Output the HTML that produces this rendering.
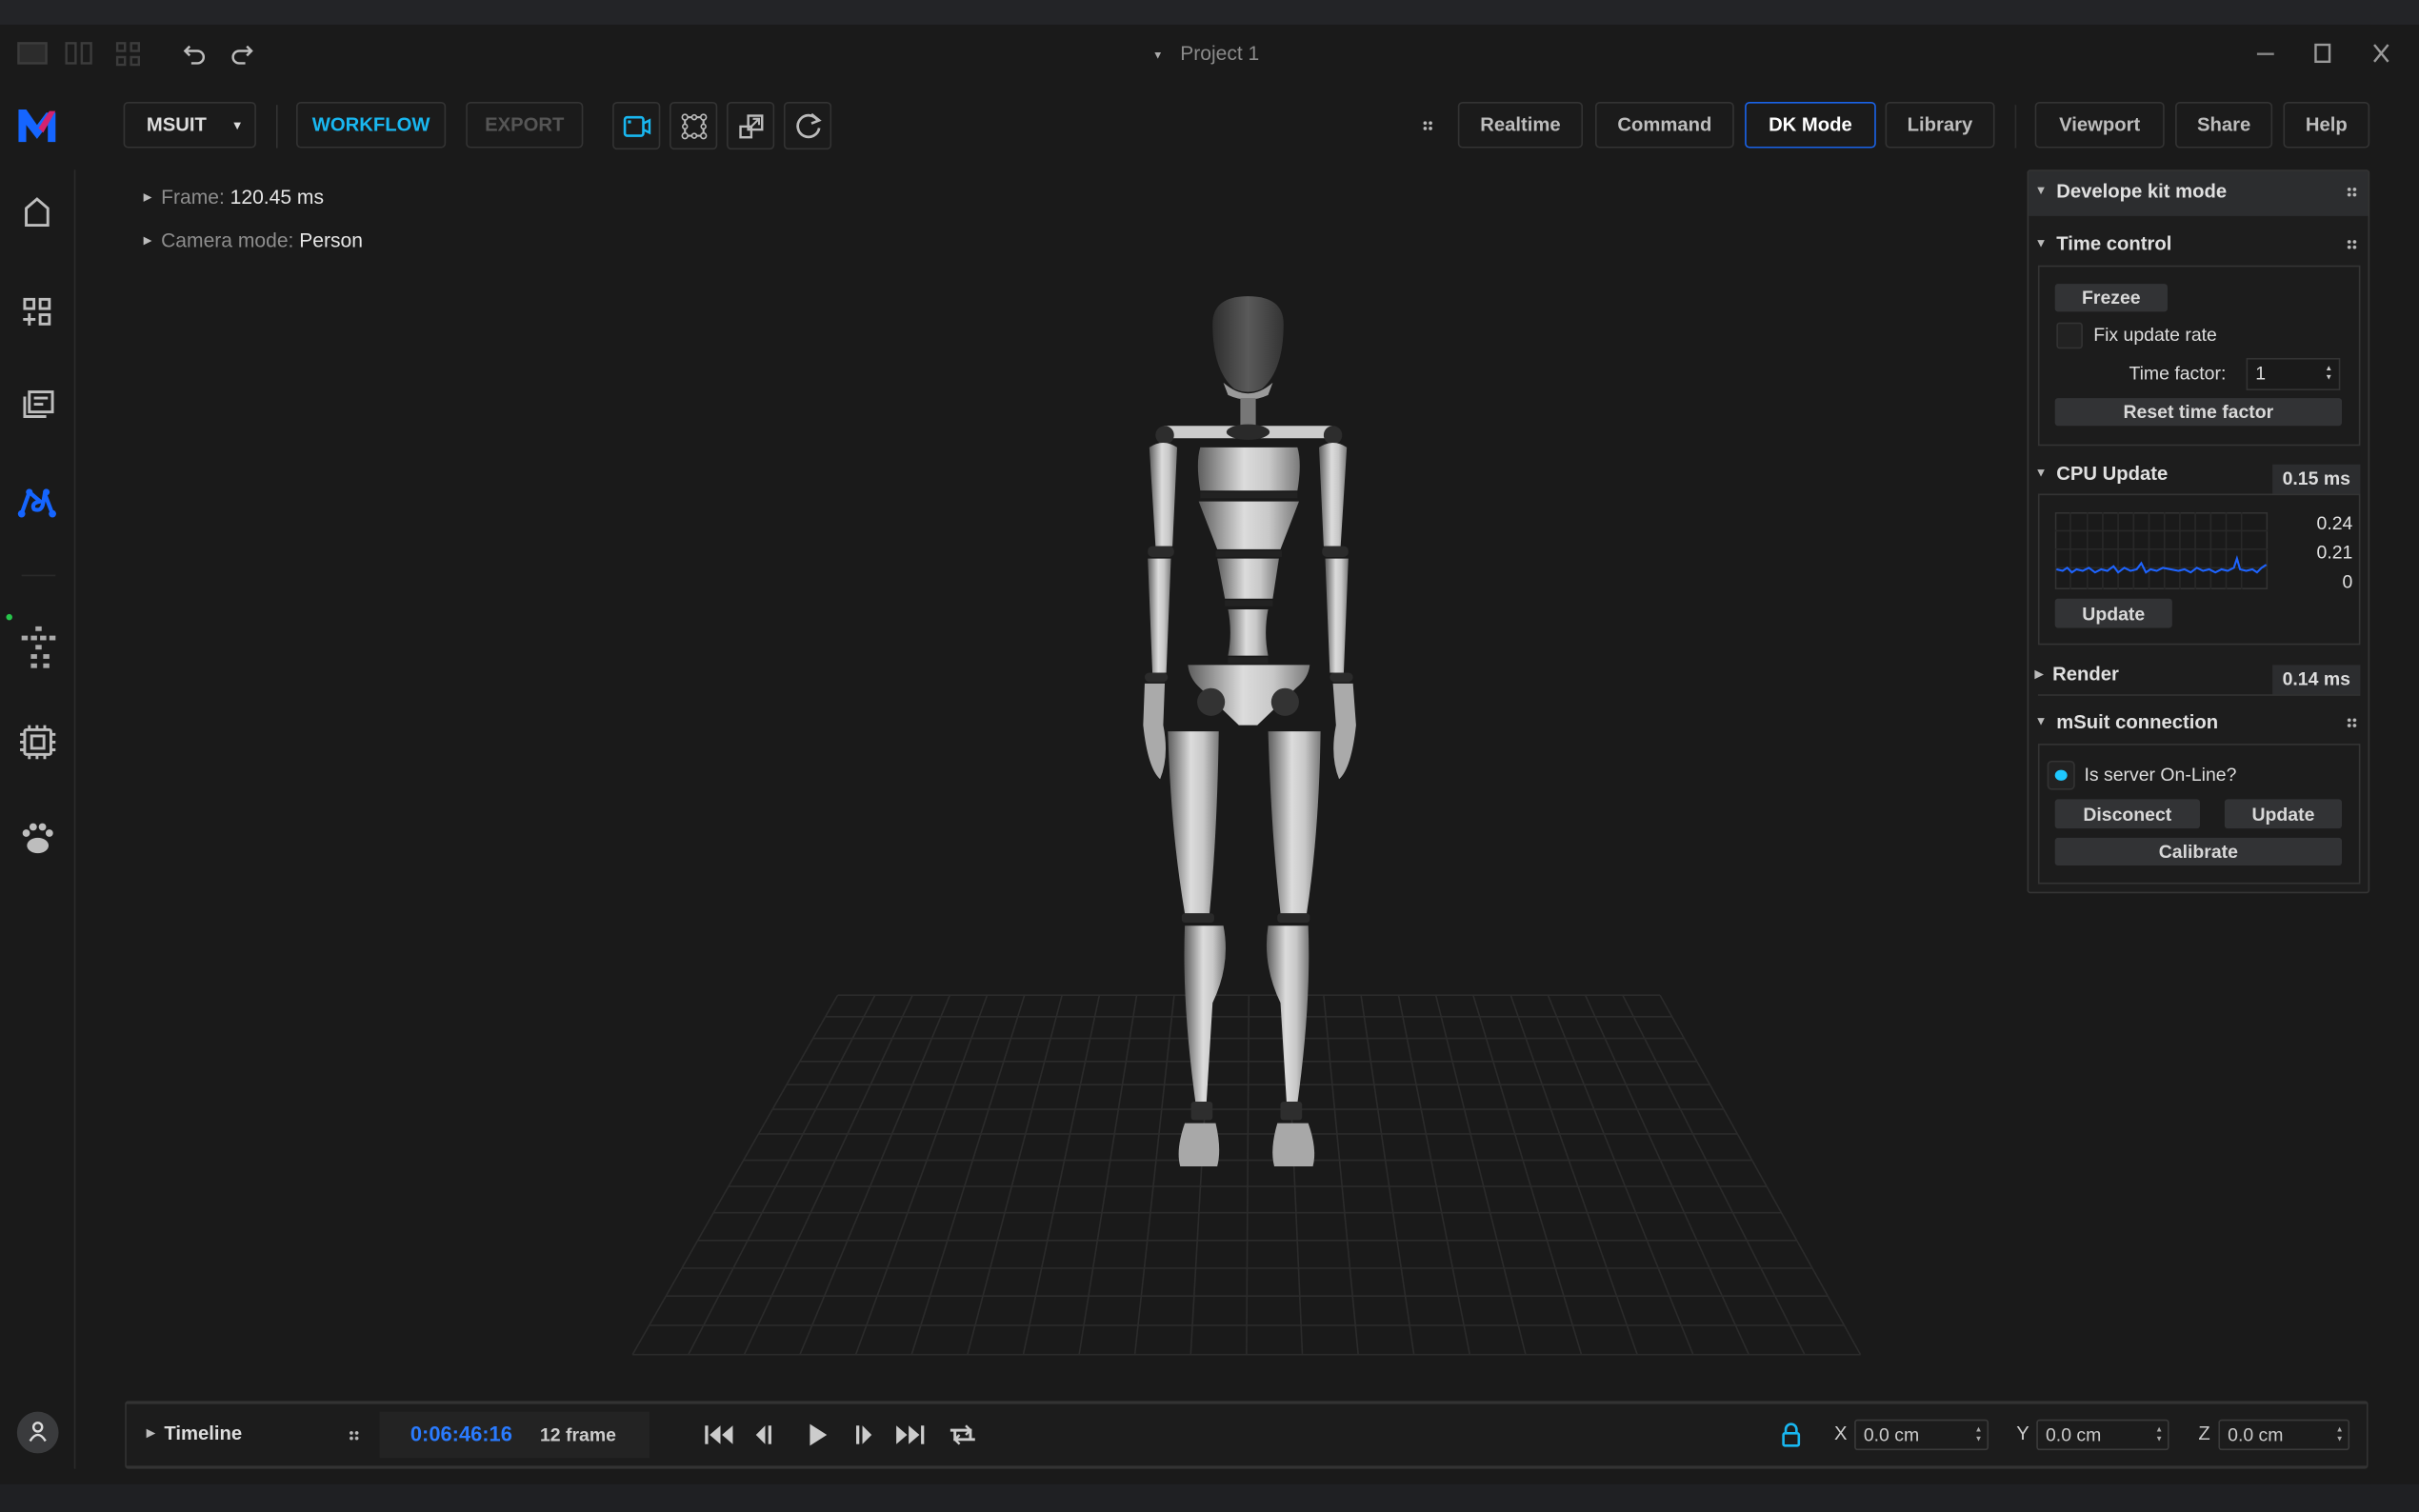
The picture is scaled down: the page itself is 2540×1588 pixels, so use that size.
<!DOCTYPE html>
<html><head><meta charset="utf-8"><style>
html,body{margin:0;padding:0;width:2540px;height:1588px;overflow:hidden;background:#1a1a1a}
#s{position:absolute;left:0;top:0;width:1568px;height:980px;transform:scale(1.6199,1.6204);transform-origin:0 0;background:#1a1a1a;font-family:"Liberation Sans",sans-serif;color:#ddd;overflow:hidden}
.a{position:absolute}
.btn{position:absolute;top:66px;height:30px;border:1px solid #333;border-radius:3px;background:#1b1b1b;font-size:12.5px;font-weight:bold;color:#bdbdbd;display:flex;align-items:center;justify-content:center;box-sizing:border-box}
.ib{width:31px;height:31px}
.pb{position:absolute;background:#323335;border-radius:2px;font-size:12px;font-weight:bold;color:#d8d8d8;display:flex;align-items:center;justify-content:center}
.box{position:absolute;left:1321px;width:209px;border:1px solid #343434;background:#1c1c1c;box-sizing:border-box}
.hd{position:absolute;font-size:12.5px;font-weight:bold;color:#e0e0e0}
.tri{font-size:8px;color:#bbb;margin-right:6px;position:relative;top:-2px}
.dots{position:absolute;width:7px;height:7px;background:radial-gradient(circle,#bbb 1px,transparent 1.3px) 0 0/3.5px 3.5px}
.inp{position:absolute;top:920px;height:20px;border:1px solid #3a3a3a;background:#1c1c1c;border-radius:2px;font-size:12px;color:#ccc;box-sizing:border-box;padding-left:5px;line-height:18px}
.inp:after{content:"▲\A▼";white-space:pre;position:absolute;right:3px;top:3px;font-size:5px;line-height:6px;color:#aaa}
.lbl{position:absolute;top:922px;font-size:12.5px;color:#ccc}
</style></head><body><div id="s">
<div class="a" style="left:0;top:0;width:1568px;height:16px;background:#232427"></div>
<svg class="a" style="left:0;top:16px" width="1568" height="40">
<g fill="none" stroke="#3c3c3c" stroke-width="1.5">
<rect x="12" y="12" width="18" height="13" fill="#2c2c2c"/>
<rect x="43" y="12" width="6" height="13"/><rect x="53" y="12" width="6" height="13"/>
<rect x="76" y="12" width="5" height="5"/><rect x="85" y="12" width="5" height="5"/><rect x="76" y="21" width="5" height="5"/><rect x="85" y="21" width="5" height="5"/>
</g>
<g fill="none" stroke="#bdbdbd" stroke-width="1.5">
<path d="M123 14 L120 17 L123 20 M120 17 H128 A4 4 0 0 1 128 25 H124"/>
<path d="M160 14 L163 17 L160 20 M163 17 H155 A4 4 0 0 0 155 25 H159"/>
<path d="M1463 19 H1474" stroke="#888"/>
<rect x="1501" y="13" width="9" height="11" stroke="#999"/>
<path d="M1539 13 L1548 24 M1548 13 L1539 24" stroke="#999"/>
</g>
<text x="747" y="22" font-size="7" fill="#aaa">▼</text>
<text x="765" y="23" font-size="13" fill="#8a8a8a" font-family="Liberation Sans">Project 1</text>
</svg>
<svg class="a" style="left:11px;top:69px" width="28" height="24"><path d="M1 23 V2 H6 L13 12 L19 4 H25 V23 H20 V12 L13 21 L6 12 V23Z" fill="#1565ff"/><path d="M14 14 L21 3 H25 L17 17Z" fill="#d4236f"/></svg>
<div class="btn" style="left:80px;width:86px;justify-content:flex-start;padding-left:14px;color:#ddd">MSUIT<span style="font-size:8px;margin-left:16px">▼</span></div>
<div class="a" style="left:179px;top:68px;width:1px;height:28px;background:#333"></div>
<div class="btn" style="left:192px;width:97px;color:#19b7f0">WORKFLOW</div>
<div class="btn" style="left:302px;width:76px;color:#555">EXPORT</div>
<div class="btn ib" style="left:397px;top:66px"><svg width="20" height="18"><rect x="2" y="3" width="12" height="12" rx="1.5" fill="none" stroke="#19b7f0" stroke-width="1.6"/><path d="M14 7 L18 5 V13 L14 11" fill="none" stroke="#19b7f0" stroke-width="1.5"/><rect x="4" y="5" width="2" height="2" fill="#19b7f0"/></svg></div>
<div class="btn ib" style="left:434px;top:66px"><svg width="20" height="20"><rect x="4" y="4" width="12" height="12" fill="none" stroke="#bbb" stroke-width="1.3"/><g fill="#1b1b1b" stroke="#bbb"><circle cx="4" cy="4" r="1.8"/><circle cx="16" cy="4" r="1.8"/><circle cx="4" cy="16" r="1.8"/><circle cx="16" cy="16" r="1.8"/><circle cx="10" cy="4" r="1.5"/><circle cx="10" cy="16" r="1.5"/><circle cx="4" cy="10" r="1.5"/><circle cx="16" cy="10" r="1.5"/></g></svg></div>
<div class="btn ib" style="left:471px;top:66px"><svg width="20" height="20"><rect x="3" y="10" width="7" height="7" fill="none" stroke="#bbb" stroke-width="1.5"/><rect x="8" y="3" width="9" height="9" fill="none" stroke="#bbb" stroke-width="1.5"/><path d="M9 11 L15 5 M11 5 H15 V9" stroke="#bbb" fill="none" stroke-width="1.3"/></svg></div>
<div class="btn ib" style="left:508px;top:66px"><svg width="20" height="20"><path d="M16 6 A7 7 0 1 0 17 11" fill="none" stroke="#bbb" stroke-width="1.7"/><path d="M12 2 L17 6 L12 8" fill="none" stroke="#bbb" stroke-width="1.6"/></svg></div>
<div class="dots" style="left:922px;top:78px"></div>
<div class="btn" style="left:945px;width:81px">Realtime</div>
<div class="btn" style="left:1034px;width:90px">Command</div>
<div class="btn" style="left:1131px;width:85px;border:1.5px solid #1a63e8;color:#fff">DK Mode</div>
<div class="btn" style="left:1222px;width:71px">Library</div>
<div class="a" style="left:1306px;top:68px;width:1px;height:28px;background:#2c2c2c"></div>
<div class="btn" style="left:1319px;width:84px">Viewport</div>
<div class="btn" style="left:1410px;width:63px">Share</div>
<div class="btn" style="left:1480px;width:56px">Help</div>
<div class="a" style="left:48px;top:110px;width:1px;height:842px;background:#2a2a2a"></div>
<svg class="a" style="left:0;top:110px" width="48" height="460">
<path d="M17 36 V25 L24 19 L31 25 V36Z" fill="none" stroke="#bdbdbd" stroke-width="1.8"/>
<g fill="none" stroke="#bdbdbd" stroke-width="1.8"><rect x="16" y="84" width="6" height="6"/><rect x="26" y="84" width="6" height="6"/><rect x="26" y="94" width="6" height="6"/><path d="M19 93 V101 M15 97 H23"/></g>
<g fill="none" stroke="#bdbdbd" stroke-width="1.8"><rect x="19" y="144" width="15" height="13"/><path d="M22 148 H31 M22 152 H28 M16 147 V160 H30"/></g>
<path d="M14 223 L19 209 L26 215 Q20 216 22 220 Q27 222 28 216 L29 210 L34 223" fill="none" stroke="#1565ff" stroke-width="2.6" stroke-linecap="round" stroke-linejoin="round"/>
<circle cx="14" cy="223" r="2.4" fill="#1565ff"/><circle cx="34" cy="223" r="2.4" fill="#1565ff"/><circle cx="19" cy="209" r="2.2" fill="#1565ff"/><circle cx="30" cy="209" r="2.2" fill="#1565ff"/>
<path d="M14 263 H36" stroke="#2a2a2a"/>
<circle cx="6" cy="290" r="2" fill="#27c54b"/>
<g fill="#aaa"><rect x="23" y="296" width="4" height="3"/><rect x="14" y="302" width="4" height="3"/><rect x="20" y="302" width="4" height="3"/><rect x="26" y="302" width="4" height="3"/><rect x="32" y="302" width="4" height="3"/><rect x="23" y="308" width="4" height="3"/><rect x="20" y="314" width="4" height="3"/><rect x="28" y="314" width="4" height="3"/><rect x="20" y="320" width="4" height="3"/><rect x="28" y="320" width="4" height="3"/></g>
<g fill="none" stroke="#bdbdbd" stroke-width="1.8"><rect x="16" y="363" width="17" height="16" rx="1"/><rect x="20.5" y="367" width="8" height="8"/><path d="M13 366 H16 M13 371 H16 M13 376 H16 M33 366 H36 M33 371 H36 M33 376 H36 M19 360 V363 M24 360 V363 M29 360 V363 M19 379 V382 M24 379 V382 M29 379 V382"/></g>
<g fill="#bdbdbd"><ellipse cx="24.5" cy="438" rx="7" ry="5"/><circle cx="17" cy="430" r="2.4"/><circle cx="21.5" cy="426" r="2.4"/><circle cx="27.5" cy="426" r="2.4"/><circle cx="32" cy="430" r="2.4"/></g>
</svg>
<div class="a" style="left:11px;top:915px;width:27px;height:27px;border-radius:50%;background:#3a3b3d"></div>
<svg class="a" style="left:11px;top:915px" width="27" height="27"><circle cx="13.5" cy="10" r="2.8" fill="none" stroke="#ddd" stroke-width="1.5"/><path d="M8.5 19 Q13.5 11 18.5 19" fill="none" stroke="#ddd" stroke-width="1.5"/></svg>
<div class="a" style="left:93px;top:120px;font-size:13px;color:#8d8d8d"><span class="tri" style="font-size:7px">▶</span>Frame: <span style="color:#e6e6e6">120.45 ms</span></div>
<div class="a" style="left:93px;top:148px;font-size:13px;color:#8d8d8d"><span class="tri" style="font-size:7px">▶</span>Camera mode: <span style="color:#e6e6e6">Person</span></div>
<svg class="a" style="left:0;top:0" width="1568" height="980">
<defs>
<linearGradient id="g" x1="0" x2="1"><stop offset="0" stop-color="#5e5e5e"/><stop offset=".45" stop-color="#dcdcdc"/><stop offset=".7" stop-color="#c8c8c8"/><stop offset="1" stop-color="#7a7a7a"/></linearGradient>
<linearGradient id="h" x1="0" x2="1"><stop offset="0" stop-color="#2e2e2e"/><stop offset=".5" stop-color="#5a5a5a"/><stop offset="1" stop-color="#343434"/></linearGradient>
</defs>
<g stroke="#2b2b2b" stroke-width="1" fill="none">
<path d="M543 645L410 878M567.2 645L446.2 878M591.5 645L482.4 878M615.7 645L518.5 878M639.9 645L554.7 878M664.1 645L590.9 878M688.4 645L627.1 878M712.6 645L663.3 878M736.8 645L699.5 878M761.1 645L735.6 878M785.3 645L771.8 878M809.5 645L808 878M833.8 645L844.2 878M858 645L880.4 878M882.2 645L916.5 878M906.5 645L952.7 878M930.7 645L988.9 878M954.9 645L1025.1 878M979.2 645L1061.3 878M1003.4 645L1097.5 878M1027.6 645L1133.6 878M1051.8 645L1169.8 878M1076 645L1206 878"/>
<path d="M543 645H1076M535 659H1084M527 673H1092M518.5 688H1100M510 703H1108.4M500.8 719H1117.3M491.6 735H1126.2M481.9 752H1135.7M472.2 769H1145.2M462.5 786H1154.7M452.2 804H1164.7M441.9 822H1174.8M431.7 840H1184.8M420.8 859H1195.4M410 878H1206"/>
</g>
<path d="M786 210 Q786 192 809 192 Q832 192 832 210 Q832 240 818 252 Q809 256 800 252 Q786 240 786 210Z" fill="url(#h)"/>
<path d="M793 248 Q809 262 825 248 L822 256 Q809 262 796 256Z" fill="#9a9a9a"/>
<rect x="804" y="258" width="10" height="18" fill="#777"/>
<rect x="752" y="276" width="114" height="8" rx="3" fill="#ccc"/>
<ellipse cx="809" cy="280" rx="14" ry="5" fill="#2a2a2a"/>
<circle cx="755" cy="282" r="6" fill="#2d2d2d"/><circle cx="864" cy="282" r="6" fill="#2d2d2d"/>
<path d="M778 290 H841 Q844 300 841 318 H778 Q775 300 778 290Z" fill="url(#g)"/>
<rect x="778" y="319" width="63" height="4" fill="#222"/>
<path d="M777 325 H842 L830 356 H789Z" fill="url(#g)"/>
<rect x="788" y="357" width="43" height="4" fill="#222"/>
<path d="M789 362 H829 L825 388 H794Z" fill="url(#g)"/>
<rect x="794" y="389" width="31" height="4" fill="#222"/>
<path d="M796 395 H822 Q819 410 822 425 H796 Q799 410 796 395Z" fill="url(#g)"/>
<rect x="796" y="426" width="26" height="4" fill="#222"/>
<path d="M770 431 H849 Q848 440 840 446 L815 470 H803 L778 446 Q771 440 770 431Z" fill="url(#g)"/>
<path d="M745 290 Q754 284 763 290 L760 354 H749Z" fill="url(#g)"/>
<path d="M855 290 Q864 284 873 290 L869 354 H858Z" fill="url(#g)"/>
<rect x="744" y="354" width="17" height="7" rx="3" fill="#2b2b2b"/><rect x="857" y="354" width="17" height="7" rx="3" fill="#2b2b2b"/>
<path d="M744 362 H759 L756 436 H747Z" fill="url(#g)"/>
<path d="M859 362 H874 L871 436 H862Z" fill="url(#g)"/>
<rect x="742" y="436" width="15" height="6" rx="3" fill="#2b2b2b"/><rect x="862" y="436" width="15" height="6" rx="3" fill="#2b2b2b"/>
<path d="M742 443 H755 L754 470 Q758 490 752 505 Q744 498 741 470Z" fill="#aaa"/>
<path d="M864 443 H877 L879 470 Q876 498 868 505 Q862 490 866 470Z" fill="#aaa"/>
<circle cx="785" cy="455" r="9" fill="#333"/><circle cx="833" cy="455" r="9" fill="#333"/>
<path d="M757 474 H790 Q789 540 784 592 H768 Q759 540 757 474Z" fill="url(#g)"/>
<path d="M822 474 H856 Q855 540 847 592 H830 Q824 540 822 474Z" fill="url(#g)"/>
<rect x="766" y="592" width="21" height="6" rx="2" fill="#2a2a2a"/><rect x="828" y="592" width="21" height="6" rx="2" fill="#2a2a2a"/>
<path d="M768 600 H793 Q798 625 786 650 L782 715 H775 Q766 650 768 600Z" fill="url(#g)"/>
<path d="M822 600 H848 Q850 650 841 715 H834 L830 650 Q818 625 822 600Z" fill="url(#g)"/>
<rect x="772" y="714" width="14" height="12" rx="2" fill="#2e2e2e"/><rect x="830" y="714" width="14" height="12" rx="2" fill="#2e2e2e"/>
<path d="M768 728 H788 Q792 745 789 756 H765 Q762 745 768 728Z" fill="#a8a8a8"/>
<path d="M828 728 H848 Q854 745 851 756 H826 Q823 745 828 728Z" fill="#a8a8a8"/>
</svg>
<div class="a" style="left:1314px;top:110px;width:222px;height:469px;border:1px solid #353535;background:#1d1d1d;box-sizing:border-box;border-radius:2px"></div>
<div class="a" style="left:1315px;top:111px;width:220px;height:29px;background:#2c2d2f"></div>
<div class="hd" style="left:1319px;top:117px"><span class="tri">▼</span>Develope kit mode</div>
<div class="dots" style="left:1521px;top:121px"></div>
<div class="hd" style="left:1319px;top:151px"><span class="tri">▼</span>Time control</div>
<div class="dots" style="left:1521px;top:155px"></div>
<div class="box" style="top:172px;height:117px"></div>
<div class="pb" style="left:1332px;top:184px;width:73px;height:18px">Frezee</div>
<div class="a" style="left:1333px;top:209px;width:17px;height:17px;background:#222;border:1px solid #333;box-sizing:border-box;border-radius:2px"></div>
<div class="a" style="left:1357px;top:210px;font-size:12px;color:#ddd">Fix update rate</div>
<div class="a" style="left:1380px;top:235px;font-size:12px;color:#ddd">Time factor:</div>
<div class="a" style="left:1456px;top:232px;width:61px;height:21px;background:#1a1a1a;border:1px solid #333;box-sizing:border-box;font-size:12px;color:#ddd;padding-left:5px;line-height:19px">1<span style="position:absolute;right:4px;top:3px;font-size:5px;line-height:6px;white-space:pre;color:#ccc">▲
▼</span></div>
<div class="pb" style="left:1332px;top:258px;width:186px;height:18px">Reset time factor</div>
<div class="hd" style="left:1319px;top:300px"><span class="tri">▼</span>CPU Update</div>
<div class="a" style="left:1473px;top:301px;width:57px;height:19px;background:#2c2d2f;font-size:12px;color:#ddd;text-align:center;line-height:19px;font-weight:bold">0.15 ms</div>
<div class="box" style="top:320px;height:98px"></div>
<svg class="a" style="left:1332px;top:332px" width="138" height="50">
<rect x="0.5" y="0.5" width="137" height="49" fill="#1a1a1a" stroke="#333"/>
<g stroke="#282828"><path d="M10 0V50M21 0V50M31 0V50M41 0V50M51 0V50M61 0V50M71 0V50M81 0V50M91 0V50M101 0V50M111 0V50M121 0V50M0 12H138M0 24H138M0 36H138"/></g>
<path d="M1 37 L5 38 L8 36 L11 39 L14 37 L18 38 L22 36 L26 39 L30 37 L34 38 L38 35 L41 39 L45 36 L49 38 L53 37 L56 33 L59 39 L62 37 L66 38 L70 36 L75 37 L80 38 L84 37 L88 39 L92 36 L96 38 L100 37 L104 39 L108 37 L112 38 L116 36 L118 30 L120 37 L124 38 L128 37 L131 39 L134 36 L137 34" fill="none" stroke="#1e64ff" stroke-width="1.3"/>
</svg>
<div class="a" style="left:1470px;top:330px;width:55px;text-align:right;font-size:12px;color:#e0e0e0;line-height:19px">0.24<br>0.21<br>0</div>
<div class="pb" style="left:1332px;top:388px;width:76px;height:19px">Update</div>
<div class="hd" style="left:1319px;top:430px"><span class="tri" style="font-size:7px">▶</span>Render</div>
<div class="a" style="left:1473px;top:431px;width:57px;height:19px;background:#2c2d2f;font-size:12px;color:#ddd;text-align:center;line-height:19px;font-weight:bold">0.14 ms</div>
<div class="a" style="left:1321px;top:450px;width:209px;height:1px;background:#333"></div>
<div class="hd" style="left:1319px;top:461px"><span class="tri">▼</span>mSuit connection</div>
<div class="dots" style="left:1521px;top:465px"></div>
<div class="box" style="top:482px;height:91px"></div>
<div class="a" style="left:1327px;top:493px;width:18px;height:19px;background:#222;border:1px solid #333;box-sizing:border-box;border-radius:3px"></div>
<div class="a" style="left:1332px;top:499px;width:8px;height:7px;border-radius:50%;background:#1ec8ff"></div>
<div class="a" style="left:1351px;top:495px;font-size:12px;color:#ddd">Is server On-Line?</div>
<div class="pb" style="left:1332px;top:518px;width:94px;height:19px">Disconect</div>
<div class="pb" style="left:1442px;top:518px;width:76px;height:19px">Update</div>
<div class="pb" style="left:1332px;top:543px;width:186px;height:18px">Calibrate</div>
<div class="a" style="left:81px;top:908px;width:1454px;height:44px;border:1px solid #333;border-top:2px solid #333;border-bottom:2px solid #333;box-sizing:border-box;background:#1c1c1c;border-radius:2px"></div>
<div class="a" style="left:95px;top:922px;font-size:12.5px;font-weight:bold;color:#ddd"><span class="tri" style="font-size:7px">▶</span>Timeline</div>
<div class="dots" style="left:226px;top:927px"></div>
<div class="a" style="left:246px;top:915px;width:175px;height:30px;background:#232323"></div>
<div class="a" style="left:266px;top:922px;font-size:13.5px;color:#2a7bff;font-weight:bold">0:06:46:16</div>
<div class="a" style="left:350px;top:923px;font-size:12px;color:#ccc;font-weight:bold">12 frame</div>
<svg class="a" style="left:450px;top:918px" width="190" height="24">
<g fill="#ccc"><rect x="7" y="6" width="2" height="12"/><path d="M17 6 L10 12 L17 18Z M25 6 L18 12 L25 18Z"/>
<path d="M46 6 L40 12 L46 18Z"/><rect x="48" y="6" width="2" height="12"/>
<path d="M75 5 L86 12 L75 19Z"/>
<rect x="105" y="6" width="2" height="12"/><path d="M109 6 L115 12 L109 18Z"/>
<path d="M131 6 L138 12 L131 18Z M139 6 L146 12 L139 18Z"/><rect x="147" y="6" width="2" height="12"/></g>
<g fill="none" stroke="#ccc" stroke-width="1.8"><path d="M166 9 H179 V15 M182 15 H169 V9"/><path d="M176 6 L179 9 L176 12 M172 12 L169 15 L172 18" stroke-width="1.5"/></g>
</svg>
<svg class="a" style="left:1154px;top:921px" width="14" height="18"><path d="M3.5 8 V5.5 A3.5 3.5 0 0 1 10.5 5.5 V8" fill="none" stroke="#19b7f0" stroke-width="1.6"/><rect x="2" y="8" width="10" height="8" rx="1" fill="none" stroke="#19b7f0" stroke-width="1.6"/></svg>
<div class="lbl" style="left:1189px">X</div><div class="inp" style="left:1202px;width:87px">0.0 cm</div>
<div class="lbl" style="left:1307px">Y</div><div class="inp" style="left:1320px;width:86px">0.0 cm</div>
<div class="lbl" style="left:1425px">Z</div><div class="inp" style="left:1438px;width:85px">0.0 cm</div>
<div class="a" style="left:0;top:962px;width:1568px;height:18px;background:#1f2023"></div>
</div></body></html>
